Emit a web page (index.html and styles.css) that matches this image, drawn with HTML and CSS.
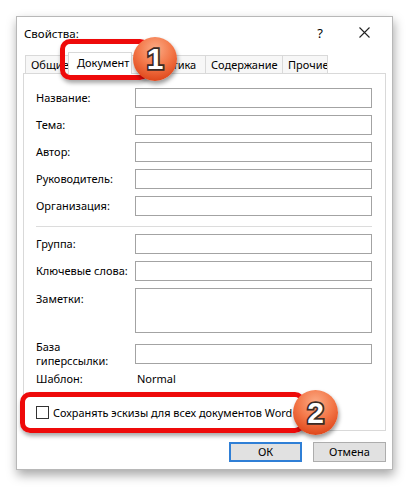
FILE: index.html
```html
<!DOCTYPE html>
<html lang="ru">
<head>
<meta charset="utf-8">
<title>Свойства</title>
<link rel="stylesheet" href="styles.css">
</head>
<body>
<div class="dialog">
  <div class="titlebar">
    <span class="title">Свойства:</span>
    <span class="help">?</span>
    <span class="close"><svg width="11" height="11" viewBox="0 0 11 11"><path d="M0.5 0.5 L10.5 10.5 M10.5 0.5 L0.5 10.5" stroke="#222" stroke-width="1.1" fill="none"/></svg></span>
  </div>
  <div class="tabs">
    <div class="tab t-general">Общие</div>
    <div class="tab active t-doc">Документ</div>
    <div class="tab t-stat">Статистика</div>
    <div class="tab t-content">Содержание</div>
    <div class="tab t-other">Прочие</div>
  </div>
  <div class="panel">
    <div class="grid g1">
      <label class="lbl">Название:</label><div class="inp"></div>
      <label class="lbl">Тема:</label><div class="inp"></div>
      <label class="lbl">Автор:</label><div class="inp"></div>
      <label class="lbl">Руководитель:</label><div class="inp"></div>
      <label class="lbl">Организация:</label><div class="inp"></div>
    </div>
    <div class="sep"></div>
    <div class="grid g2">
      <label class="lbl">Группа:</label><div class="inp"></div>
      <label class="lbl">Ключевые слова:</label><div class="inp"></div>
      <label class="lbl top">Заметки:</label><div class="inp notes"></div>
      <label class="lbl">База<br>гиперссылки:</label><div class="inp"></div>
      <label class="lbl tpl">Шаблон:</label><div class="val tpl">Normal</div>
    </div>
    <div class="check-row">
      <span class="box"></span>
      <span class="check-text">Сохранять эскизы для всех документов Word</span>
    </div>
  </div>
  <div class="buttons">
    <div class="btn ok">ОК</div>
    <div class="btn">Отмена</div>
  </div>
</div>

<div class="mark mark1"></div>
<div class="badge badge1"><span>1</span></div>
<div class="mark mark2"></div>
<div class="badge badge2"><span>2</span></div>
</body>
</html>
```

FILE: styles.css
```css
html, body {
  margin: 0;
  padding: 0;
  background: #ffffff;
}
body {
  position: relative;
  width: 409px;
  height: 487px;
  overflow: hidden;
  font-family: "Noto Sans", "Open Sans", sans-serif;
  font-size: 11px;
  color: #000;
}
.dialog {
  box-sizing: border-box;
  margin: 16px 0 0 16px;
  width: 377px;
  height: 454px;
  background: #fff;
  border: 1px solid #b8b8b8;
  box-shadow: 1px 5px 10px rgba(0,0,0,0.35);
  display: flex;
  flex-direction: column;
}
.titlebar {
  height: 31px;
  display: flex;
  align-items: center;
  padding-left: 7px;
}
.title { flex: 1; line-height: 15px; padding-top: 1px; font-size: 11.5px; }
.help { width: 12px; text-align: center; margin-right: 33px; font-size: 13px; }
.close { width: 11px; height: 11px; display: flex; margin-right: 22px; }
.tabs {
  margin-top: 7px;
  margin-left: 8px;
  height: 18px;
  display: flex;
  align-items: flex-end;
  position: relative;
  z-index: 1;
}
.tab {
  box-sizing: border-box;
  height: 18px;
  border: 1px solid #d9d9d9;
  border-bottom: none;
  background: #f7f7f7;
  line-height: 17px;
  padding-left: 5px;
  white-space: nowrap;
  overflow: hidden;
  margin-right: -1px;
}
.tab.active {
  height: 22px;
  background: #fff;
  margin-bottom: -1px;
  padding-top: 1px;
  padding-left: 8px;
  line-height: 18px;
}
.t-general { width: 44px; }
.t-doc { width: 64px; }
.t-stat { width: 75px; }
.t-content { width: 78px; }
.t-other { width: 46px; }
.panel {
  box-sizing: border-box;
  margin-left: 6px;
  width: 363px;
  height: 358px;
  border: 1px solid #d9d9d9;
  padding: 14px 13px 0 12px;
}
.grid {
  display: grid;
  grid-template-columns: 99px 237px;
  row-gap: 7px;
  align-items: center;
}
.lbl {
  line-height: 14px;
  white-space: nowrap;
}
.lbl.top { align-self: start; padding-top: 4px; }
.inp {
  box-sizing: border-box;
  height: 20px;
  border: 1px solid #a3a3a3;
  background: #fff;
}
.inp.notes { height: 45px; }
.val { line-height: 14px; padding-left: 2px; }
.tpl { margin-top: -3px; }
.sep {
  height: 1px;
  background: #dcdcdc;
  margin: 10px 0 7px;
}
.check-row {
  margin-top: 19px;
  display: flex;
  align-items: center;
  height: 15px;
}
.box {
  box-sizing: border-box;
  width: 13px;
  height: 13px;
  border: 1px solid #333;
  background: #fff;
  margin-right: 4px;
}
.check-text { white-space: nowrap; line-height: 15px; font-size: 10.9px; }
.buttons {
  margin-top: 11px;
  margin-left: 212px;
  display: flex;
  gap: 11px;
}
.btn {
  box-sizing: border-box;
  width: 73px;
  height: 20px;
  border: 1px solid #adadad;
  background: #e1e1e1;
  text-align: center;
  line-height: 18px;
}
.btn.ok {
  border: 2px solid #2f7fd6;
  line-height: 16px;
}

/* annotations */
.mark {
  position: absolute;
  z-index: 5;
  box-sizing: border-box;
  border: 5px solid #ee0a0a;
  border-radius: 10px;
  box-shadow: 1px 3px 4px rgba(0,0,0,0.35);
}
.mark1 { left: 60px; top: 39px; width: 90px; height: 41px; }
.mark2 { left: 20px; top: 392px; width: 285px; height: 41px; }
.badge {
  position: absolute;
  z-index: 6;
  box-sizing: border-box;
  border-radius: 50%;
  background: radial-gradient(circle at 50% 28%, #fbab86 0%, #f37748 45%, #e04a1e 80%, #cf3a12 100%);
  box-shadow: 1px 3px 4px rgba(0,0,0,0.4);
  display: flex;
  align-items: center;
  justify-content: center;
}
.badge span {
  font-family: "Liberation Sans", Arial, sans-serif;
  font-weight: bold;
  font-size: 30px;
  color: #fff;
  -webkit-text-stroke: 3.5px #3a2a25;
  paint-order: stroke fill;
  line-height: 1;
}
.badge1 { left: 133px; top: 37px; width: 44px; height: 44px; }
.badge2 { left: 293px; top: 390px; width: 45px; height: 45px; }
```
